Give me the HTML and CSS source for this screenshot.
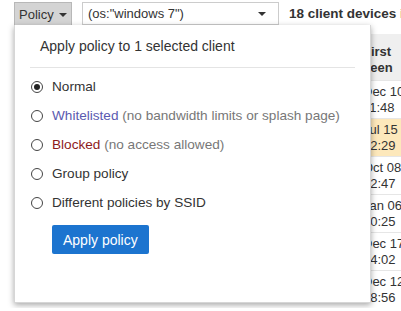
FILE: index.html
```html
<!DOCTYPE html>
<html lang="en">
<head>
  <meta charset="UTF-8">
  <meta name="viewport" content="width=device-width, initial-scale=1.0">
  <title>Clients</title>
  <link rel="stylesheet" href="styles.css">
</head>
<body>

  <!-- Toolbar -->
  <div class="toolbar">
    <div class="policy-menu">
      <button class="policy-btn">Policy<span class="caret"></span></button>

      <!-- Policy dropdown (open) -->
      <div class="policy-panel">
        <div class="panel-title">Apply policy to 1 selected client</div>
        <ul class="policy-options">
          <li class="option"><span class="radio checked"></span>Normal</li>
          <li class="option"><span class="radio"></span><span class="allow">Whitelisted</span>&nbsp;<span class="note">(no bandwidth limits or splash page)</span></li>
          <li class="option"><span class="radio"></span><span class="block">Blocked</span>&nbsp;<span class="note">(no access allowed)</span></li>
          <li class="option"><span class="radio"></span>Group policy</li>
          <li class="option"><span class="radio"></span>Different policies by SSID</li>
        </ul>
        <button class="apply-btn">Apply policy</button>
      </div>
    </div>

    <div class="search">
      <span>(os:"windows 7")</span>
      <span class="caret"></span>
    </div>

    <div class="count">18 client devices in the last month</div>
  </div>

  <!-- Client list -->
  <table class="clients">
    <colgroup>
      <col class="col-check">
      <col class="col-desc">
      <col class="col-os">
      <col class="col-seen">
      <col>
    </colgroup>
    <thead>
      <tr>
        <th></th>
        <th>Description</th>
        <th>OS</th>
        <th>First<br>seen</th>
        <th>Last<br>seen</th>
      </tr>
    </thead>
    <tbody>
      <tr><td></td><td></td><td></td><td>Dec 10<br>11:48</td><td></td></tr>
      <tr class="flagged"><td></td><td></td><td></td><td>Jul 15<br>12:29</td><td></td></tr>
      <tr><td></td><td></td><td></td><td>Oct 08<br>12:47</td><td></td></tr>
      <tr><td></td><td></td><td></td><td>Jan 06<br>10:25</td><td></td></tr>
      <tr><td></td><td></td><td></td><td>Dec 17<br>14:02</td><td></td></tr>
      <tr><td></td><td></td><td></td><td>Dec 12<br>18:56</td><td></td></tr>
    </tbody>
  </table>

</body>
</html>
```

FILE: styles.css
```css
body {
  font-family: 'Liberation Sans', Arial, sans-serif;
  font-size: 13px;
  margin: 0;
  padding: 0;
  background-color: #fff;
  color: #333;
  overflow: hidden;
}

.toolbar {
  display: flex;
  align-items: stretch;
  gap: 10px;
  height: 23px;
  padding: 2px 0 0 14px;
  white-space: nowrap;
}

.toolbar > * {
  flex-shrink: 0;
}

.policy-menu {
  position: relative;
  display: flex;
}

.caret {
  display: inline-block;
  width: 0;
  height: 0;
  border-left: 4px solid transparent;
  border-right: 4px solid transparent;
  border-top: 4px solid #333;
  vertical-align: middle;
}

.policy-btn {
  font-family: inherit;
  font-size: 13px;
  color: #333;
  background-color: #d4d4d4;
  border: 1px solid #b8b8b8;
  border-bottom: none;
  width: 58px;
  padding: 0 0 0 4px;
  margin: 0;
  text-align: left;
}

.policy-btn .caret {
  margin-left: 5px;
}

/* Dropdown panel */
.policy-panel {
  position: absolute;
  top: 100%;
  left: 0;
  width: 357px;
  box-sizing: border-box;
  padding: 13px 15px 48px;
  background-color: #fff;
  border: 1px solid #d6d6d6;
  border-top: none;
  box-shadow: 0 2px 6px rgba(0, 0, 0, 0.35);
  z-index: 10;
}

.panel-title {
  font-size: 14px;
  line-height: 16px;
  padding: 0 10px 13px;
  border-bottom: 1px solid #e4e4e4;
}

.policy-options {
  list-style: none;
  margin: 0;
  padding: 4px 0 0;
  font-size: 13.6px;
}

.option {
  display: flex;
  align-items: center;
  height: 29px;
}

.radio {
  width: 10px;
  height: 10px;
  border: 1px solid #444;
  border-radius: 50%;
  margin: 0 9px 0 1px;
  display: flex;
  align-items: center;
  justify-content: center;
  flex-shrink: 0;
}

.radio.checked::after {
  content: '';
  width: 6px;
  height: 6px;
  border-radius: 50%;
  background-color: #222;
}

.allow {
  color: #5a5ab0;
}

.block {
  color: #8e1b1b;
}

.note {
  color: #777;
}

.apply-btn {
  font-family: inherit;
  font-size: 14px;
  color: #fff;
  background-color: #1c74cf;
  border: none;
  border-radius: 2px;
  height: 29px;
  padding: 0 11px;
  margin: 8px 0 0 22px;
}

/* Search box */
.search {
  display: flex;
  align-items: center;
  justify-content: space-between;
  width: 197px;
  box-sizing: border-box;
  padding: 0 12px 0 5px;
  border: 1px solid #ccc;
}

.count {
  font-weight: bold;
  font-size: 13.5px;
  align-self: center;
}

/* Client table */
.clients {
  border-collapse: collapse;
  table-layout: fixed;
  width: 640px;
  margin: 9px 0 0 14px;
}

.col-check { width: 28px; }
.col-desc { width: 170px; }
.col-os { width: 145px; }
.col-seen { width: 70px; }

.clients th {
  background-color: #efefef;
  font-weight: bold;
  text-align: left;
  vertical-align: bottom;
  line-height: 16px;
  padding: 10px 6px 4px;
}

.clients td {
  line-height: 16px;
  padding: 3px 6px 2px;
  border-top: 1px solid #e6e6e6;
  vertical-align: top;
}

.clients tr.flagged td {
  background-color: #fde8bb;
}
```
